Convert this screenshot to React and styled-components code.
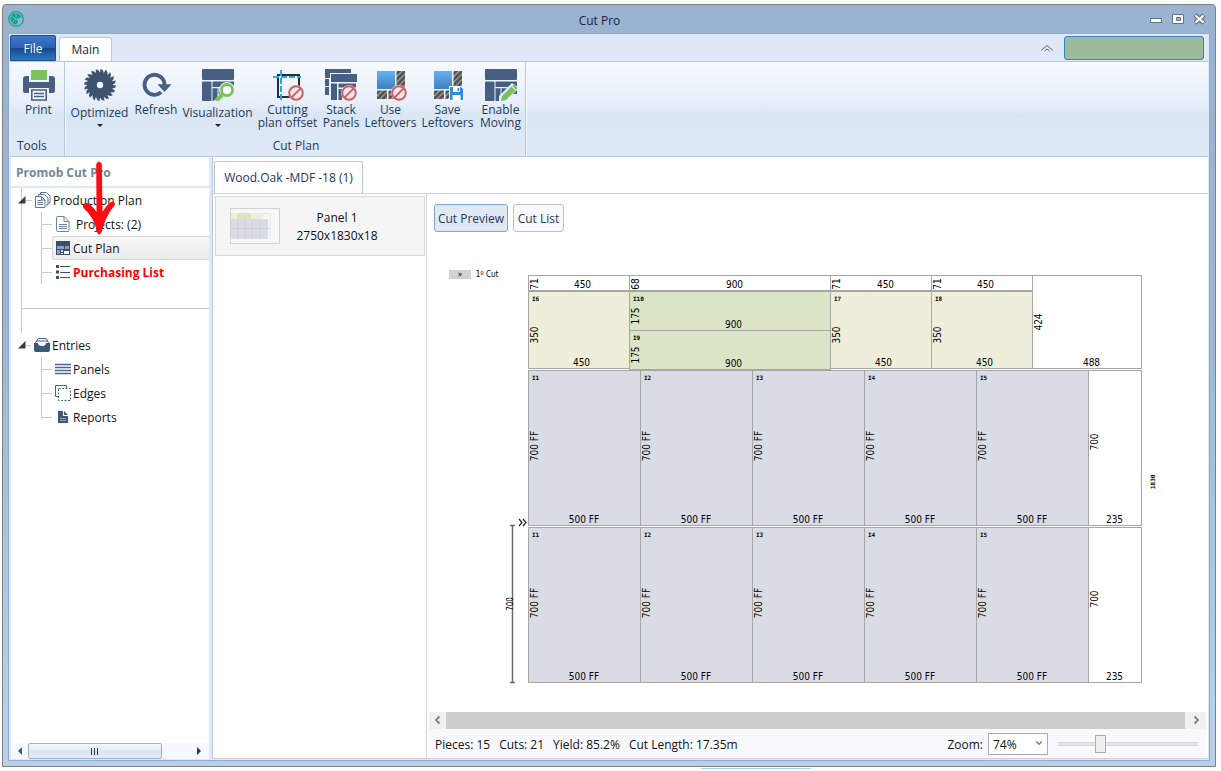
import React from 'react';
import styled, { createGlobalStyle, css } from 'styled-components';

const Global = createGlobalStyle`
  *, *::before, *::after { box-sizing: border-box; }
  body { margin: 0; background: #fff; font-family: "Open Sans", "Noto Sans", sans-serif; font-size: 12px; color: #111; }
  button, select { font: inherit; color: inherit; }
  ul { list-style: none; margin: 0; padding: 0; }
`;

const Desktop = styled.div`
  position: relative;
  min-height: 100vh;
  display: flex;
  padding: 4px 5px 4px 2px;
`;
const TaskbarHint = styled.div`
  position: absolute;
  left: 701px;
  bottom: 2px;
  width: 110px;
  height: 1px;
  background: #a9d5ea;
`;
const Window = styled.div`
  position: relative;
  flex: 1;
  min-width: 0;
  display: flex;
  flex-direction: column;
  border: 1px solid #808080;
  border-radius: 4px 4px 0 0;
  padding: 0 5px 5px;
  background: linear-gradient(#9ab3d0, #9cb5d2 40%, #b9d0ea 95%);
`;
const TitleBar = styled.header`
  display: flex;
  align-items: center;
  height: 28px;
  color: #16263c;
`;
const TitleMark = styled.div`
  display: flex;
  align-items: center;
  width: 43px;
  height: 16px;
`;
const Title = styled.h1`
  flex: 1;
  margin: 0;
  padding-top: 2px;
  text-align: center;
  font-size: 12px;
  font-weight: 400;
`;
const WindowButtons = styled.div`
  display: flex;
  gap: 6px;
  padding-right: 2px;
`;
const PlainButton = styled.button`
  display: flex;
  align-items: center;
  justify-content: center;
  border: 0;
  padding: 0;
  background: transparent;
  width: ${(p) => p.$w || 16}px;
  height: ${(p) => p.$h || 16}px;
`;
const Client = styled.div`
  flex: 1;
  min-height: 0;
  display: flex;
  flex-direction: column;
  border: 1px solid #92a9c8;
  background: #dfe8f6;
  padding: 0 1px 1px;
`;
const TabStrip = styled.div`
  display: flex;
  align-items: flex-end;
  height: 27px;
`;
const FileTab = styled.button`
  width: 46px;
  height: 26px;
  margin-right: 3px;
  border: 1px solid #1d4c9c;
  border-radius: 2px 2px 0 0;
  color: #fff;
  padding: 0;
  background: linear-gradient(#3f79c6, #2a62b4 50%, #17458f 51%, #2b7ab9);
`;
const MainTab = styled.button`
  width: 53px;
  height: 24px;
  border: 1px solid #b8c8e2;
  border-bottom: 0;
  border-radius: 3px 3px 0 0;
  background: #fdfeff;
  color: #16263c;
  padding: 0;
`;
const StripTools = styled.div`
  display: flex;
  gap: 9px;
  margin-left: auto;
  align-items: center;
  height: 27px;
  padding-right: 4px;
`;
const AccountBox = styled.button`
  width: 140px;
  height: 24px;
  border: 1px solid #3d7fbf;
  border-radius: 3px;
  background: #9abc9d;
`;
const Ribbon = styled.div`
  display: flex;
  height: 96px;
  border: solid #b8c8e2;
  border-width: 1px 0;
  background: linear-gradient(#f7fafe, #e5eefa 45%, #dbe6f4 55%, #dfe9f7);
`;
const RibbonGroup = styled.section`
  display: flex;
  flex-direction: column;
  border-right: 1px solid #b8c8e2;
  box-shadow: 1px 0 #f5f9fe;
  padding-left: ${(p) => p.$pad}px;
`;
const GroupButtons = styled.div`
  display: flex;
  flex: 1;
`;
const GroupCaption = styled.div`
  height: 20px;
  line-height: 20px;
  padding-left: ${(p) => (p.$left ? 4 : 0)}px;
  text-align: ${(p) => (p.$left ? 'left' : 'center')};
  color: #1e395b;
`;
const Command = styled.button`
  display: flex;
  flex-direction: column;
  align-items: center;
  width: ${(p) => p.$w}px;
  height: 72px;
  padding: 7px 0 0;
  border: 0;
  background: transparent;
  color: #1e395b;
  line-height: 13px;
  white-space: nowrap;
  text-align: center;
`;
const CommandLabel = styled.span`
  display: block;
  padding-top: ${(p) => (p.$tall ? 5 : 2)}px;
`;
const LabelLine = styled.span`
  display: block;
  height: 13px;
`;
const Caret = styled.span`
  margin-top: 5px;
  border: solid transparent;
  border-width: 3px 3px 0;
  border-top-color: #16263c;
`;

const Body = styled.div`
  flex: 1;
  min-height: 0;
  display: grid;
  grid-template-columns: 198px minmax(0, 1fr);
  gap: 3px;
  padding-left: 1px;
`;
const Sidebar = styled.aside`
  display: flex;
  flex-direction: column;
  min-width: 0;
  background: #fff;
`;
const SidebarTitle = styled.h2`
  margin: 0;
  height: 31px;
  line-height: 31px;
  padding-left: 5px;
  border-bottom: 2px solid #dfe8f6;
  font-size: 12px;
  font-weight: 700;
  color: #73879b;
`;
const Tree = styled.nav`
  flex: 1;
`;
const Branch = styled.section`
  margin-left: 10px;
  ${(p) => p.$ruled && css`
    height: 121px;
    border-left: 1px solid #c8c8c8;
    border-bottom: 1px solid #c8c8c8;
  `}
`;
const Stem = styled.div`
  height: 24px;
  border-left: 1px solid #c8c8c8;
`;
const BranchHead = styled.div`
  display: flex;
  align-items: center;
  height: 24px;
  margin-left: ${(p) => (p.$flush ? -3 : -4)}px;
`;
const Dash = styled.span`
  width: ${(p) => p.$w}px;
  height: 1px;
  margin-right: ${(p) => p.$gap}px;
  background: #c8c8c8;
`;
const BranchLabel = styled.span`
  padding: 1px 0 0 2px;
`;
const Leaves = styled.ul`
  margin-left: ${(p) => (p.$flush ? 20 : 19)}px;
`;
const Leaf = styled.li`
  display: flex;
  align-items: center;
  height: 24px;
  background: linear-gradient(#c8c8c8, #c8c8c8) no-repeat 0 0 / 1px ${(p) => (p.$last ? '50%' : '100%')};
`;
const LeafLink = styled.a`
  flex: 1;
  height: 24px;
  display: flex;
  align-items: center;
  gap: ${(p) => (p.$wide ? 5 : 2)}px;
  padding-left: 2px;
  text-decoration: none;
  white-space: nowrap;
  color: ${(p) => (p.$alert ? '#ff0000' : '#111')};
  font-weight: ${(p) => (p.$alert ? 700 : 400)};
  border: solid ${(p) => (p.$active ? '#d6d6d6' : 'transparent')};
  border-width: 1px 0 1px 1px;
  border-radius: 3px 0 0 3px;
  background: ${(p) => (p.$active ? 'linear-gradient(#f7f7f7, #ececec)' : 'transparent')};
`;
const SideScroll = styled.div`
  display: flex;
  align-items: center;
  height: 16px;
  background: #f5f8fe;
`;
const SideThumb = styled.div`
  display: flex;
  align-items: center;
  justify-content: center;
  gap: 1px;
  width: 134px;
  height: 16px;
  margin: 0 auto 0 0;
  border: 1px solid #9fb0cc;
  border-radius: 2px;
  background: linear-gradient(#f6f9fe, #e2eaf6 50%, #d8e3f3 51%, #e2ebf8);
`;
const Grip = styled.i`
  width: 1px;
  height: 7px;
  margin-right: 1px;
  background: #1e395b;
`;

const Workspace = styled.main`
  display: flex;
  flex-direction: column;
  min-width: 0;
  background: #fff;
  border-left: 1px solid #b8c8e2;
  border-bottom: 1px solid #d0d0d0;
`;
const MaterialTabs = styled.div`
  display: flex;
  align-items: flex-end;
  height: 37px;
  padding-left: 1px;
  border-bottom: 1px solid #d2d2d2;
`;
const MaterialTab = styled.button`
  height: 32px;
  width: 149px;
  padding: 0;
  border: 1px solid #b4c6e0;
  border-bottom: 0;
  border-radius: 2px 2px 0 0;
  background: #fff;
  color: #1e395b;
  white-space: nowrap;
`;
const Split = styled.div`
  flex: 1;
  min-height: 0;
  display: grid;
  grid-template-columns: 214px minmax(0, 1fr);
`;
const PanelList = styled.div`
  border-right: 1px solid #d5d5d5;
  padding: 2px 1px 0 2px;
`;
const PanelCard = styled.button`
  display: flex;
  align-items: center;
  width: 100%;
  height: 60px;
  padding: 0 0 0 14px;
  border: 1px solid #d9d9d9;
  background: #f5f5f5;
  line-height: 18px;
`;
const PanelText = styled.span`
  flex: 1;
  padding: 2px 30px 0 0;
  text-align: center;
`;
const Preview = styled.section`
  display: flex;
  flex-direction: column;
  min-width: 0;
  padding: 0 2px 1px;
`;
const ViewSwitch = styled.div`
  display: flex;
  gap: 5px;
  padding: 10px 5px 0;
`;
const ViewButton = styled.button`
  width: ${(p) => p.$w}px;
  height: 28px;
  padding: 0;
  border: 1px solid ${(p) => (p.$on ? '#7fa5d3' : '#bcc0cc')};
  border-radius: 3px;
  background: ${(p) => (p.$on ? '#dfe9f6' : '#f7f9ff')};
  color: #1e395b;
  white-space: nowrap;
`;
const Canvas = styled.div`
  flex: 1;
  min-height: 0;
  overflow: hidden;
  padding: 28px 0 0 11px;
  svg { display: block; }
`;
const HScroll = styled.div`
  display: flex;
  height: 17px;
  background: #f0f0f0;
`;
const HThumb = styled.div`
  flex: 1;
  background: #cdcdcd;
`;
const Status = styled.footer`
  display: flex;
  align-items: center;
  gap: 9px;
  height: 28px;
  padding: 2px 6px 0;
  background: #f8f9ff;
  white-space: nowrap;
`;
const ZoomBox = styled.div`
  display: flex;
  align-items: center;
  gap: 5px;
  margin-left: auto;
`;
const SelectWrap = styled.span`
  position: relative;
  svg { position: absolute; right: 5px; top: 6px; pointer-events: none; }
`;
const ZoomSelect = styled.select`
  display: block;
  appearance: none;
  width: 60px;
  height: 22px;
  padding: 0 4px;
  border: 1px solid #acacac;
  border-radius: 0;
  background: #fff;
`;
const ZoomSlider = styled.input`
  appearance: none;
  width: 140px;
  height: 18px;
  margin: 0 2px 0 5px;
  background: linear-gradient(#e7eaea, #e7eaea) no-repeat center / 100% 2px, linear-gradient(#d6d6d6, #d6d6d6) no-repeat center / 100% 4px;
  &::-webkit-slider-thumb {
    appearance: none;
    width: 11px;
    height: 18px;
    border: 1px solid #acacac;
    background: #f0f0f0;
  }
`;
const Pointer = styled.svg`
  position: absolute;
  left: 77px;
  top: 155px;
  pointer-events: none;
`;

const NAVY = '#465f83';
const Ico = ({ children, size = 32, ...rest }) => (
  <svg width={size} height={size} viewBox={`0 0 ${size} ${size}`} fill="none" aria-hidden="true" {...rest}>{children}</svg>
);
const Forbidden = ({ x, y }) => (
  <g>
    <circle cx={x} cy={y} r="8" fill="#f2f5fb" />
    <circle cx={x} cy={y} r="6.8" fill="#f1e4ea" stroke="#cc5f61" strokeWidth="2" />
    <path d={`M${x - 4.6} ${y + 4.6}L${x + 4.6} ${y - 4.6}`} stroke="#cc5f61" strokeWidth="2" />
  </g>
);
const PrintIcon = () => (
  <Ico>
    <path d="M8 1h16v10H8z" fill="#7ac25b" />
    <path d="M3 7h3v6h20V7h3q3 0 3 3v12q0 2-2 2h-4v-5H6v5H2q-2 0-2-2V10q0-3 3-3z" fill={NAVY} />
    <path d="M8.800 21h14.400v10H8.800z" fill="#f5f8fc" stroke={NAVY} strokeWidth="1.600" />
    <path d="M11 24.500h10M11 27.500h10" stroke={NAVY} strokeWidth="1.300" />
  </Ico>
);
const teeth = Array.from({ length: 20 }, (_, i) => {
  const at = (r, a) => `${(16 + r * Math.cos(a)).toFixed(2)} ${(16 + r * Math.sin(a)).toFixed(2)}`;
  const a = (i * Math.PI) / 10;
  return `${i ? 'L' : 'M'}${at(12.5, a)}L${at(16.4, a + 0.04)}L${at(15, a + 0.2)}`;
}).join('') + 'Z';
const SawIcon = () => (
  <Ico>
    <path d={`${teeth}M19.200 16a3.200 3.200 0 1 0-6.400 0a3.200 3.200 0 1 0 6.400 0Z`} fill="#3f5370" fillRule="evenodd" />
  </Ico>
);
const RefreshIcon = () => (
  <Ico>
    <path d="M21.200 23.200A10 10 0 1 1 24.500 16" stroke={NAVY} strokeWidth="3.800" />
    <path d="M17.500 15.200H31.500L24.500 23z" fill={NAVY} />
  </Ico>
);
const PanelsArt = () => (
  <>
    <rect width="32" height="11" rx="1" fill={NAVY} />
    <rect y="12.500" width="9.500" height="19.500" rx="1" fill={NAVY} />
    <path d="M10.500 12.500H32v5.500H10.500zM10.500 19.200h5V32h-5zM16.500 19.200H32V25H16.500z" fill={NAVY} />
  </>
);
const VisualIcon = () => (
  <Ico>
    <PanelsArt />
    <circle cx="25" cy="21" r="8" fill="#e4edf8" />
    <path d="M11.500 32l8.500-9 5 5-5 4z" fill="#e4edf8" />
    <circle cx="25" cy="21" r="5.500" fill="#fff" stroke="#7ac25b" strokeWidth="2.800" />
    <path d="M21 25l-7 7" stroke="#7ac25b" strokeWidth="4" />
  </Ico>
);
const OffsetIcon = () => (
  <Ico>
    <rect x="6" y="6" width="21" height="22" stroke="#2b2b2b" strokeWidth="2" />
    <path d="M9 1v31M1 8h28" stroke="#22a9e8" strokeWidth="2" strokeDasharray="6 2" />
    <Forbidden x={24} y={24} />
  </Ico>
);
const StackIcon = () => (
  <Ico>
    <path d="M0 0h26v4H5v5H0zM0 10h4v7H0zM0 18h4v8H0z" fill={NAVY} />
    <path d="M6 5h26v8H6zM6 14.500h6V31H6zM13.500 14.500H31v4H13.500zM13.500 20H17v11h-3.500z" fill={NAVY} />
    <path d="M0 9.500h4.500" stroke="#eef3fb" />
    <Forbidden x={24} y={24} />
  </Ico>
);
const LeftoverArt = () => (
  <>
    <defs>
      <linearGradient id="sheet" x1="0" y1="0" x2="0" y2="1">
        <stop offset="0" stopColor="#63b1f4" /><stop offset="1" stopColor="#3f7fbd" />
      </linearGradient>
      <pattern id="hatch" width="4" height="4" patternUnits="userSpaceOnUse" patternTransform="rotate(45)">
        <rect width="4" height="4" fill="#4f4f4f" /><rect width="1.300" height="4" fill="#a5a5a5" />
      </pattern>
    </defs>
    <rect x="2" y="2" width="18" height="18" fill="url(#sheet)" />
    <path d="M21.500 2H30v17h-8.500zM2 21.500h10V30H2zM13.500 21.500H22V30h-8.500z" fill="url(#hatch)" />
  </>
);
const UseIcon = () => (<Ico><LeftoverArt /><Forbidden x={24} y={24} /></Ico>);
const SaveIcon = () => (
  <Ico>
    <LeftoverArt />
    <path d="M17 17h15v15H17z" fill="#eef3fb" />
    <path d="M18 18h11l2 2v11H18z" fill="#2f8fd6" />
    <path d="M21 18h7v5h-7zM20.500 26h8v5h-8z" fill="#fff" />
    <path d="M25.500 19h1.500v3h-1.500z" fill="#2f8fd6" />
  </Ico>
);
const MovingIcon = () => (
  <Ico>
    <PanelsArt />
    <path d="M14 32v-5l13-13 7 5-13 13z" fill="#e4edf8" />
    <path d="M16 32l1-5 9.500-9.500 4 4L21 31zM27.500 16.500l1.500-1.200 3 3v1.500l-1.300 1z" fill="#7ac25b" />
  </Ico>
);

const PlanIcon = () => (
  <Ico size={16} stroke="#5d7395">
    <path d="M5.500 3V.500h6l3.500 3.500v7H13.500M3.500 5V2.500h6l3.500 3.500v7H11" fill="#fff" />
    <path d="M.500 4.500h6l3.500 3.500v7.500H.500zM2.500 8.500h4M2.500 10.500h5.500M2.500 12.500h5.500M6.500 4.500v3.500h3.500" fill="#fff" />
  </Ico>
);
const ProjectIcon = () => (
  <Ico size={16} stroke="#6d82a3">
    <path d="M1.500 1.500q0-1 1-1h6.500l5 5v9q0 1-1 1h-10.500q-1 0-1-1zM9 .500v5h5M4 8.500h8M4 10.500h8M4 12.500h8" fill="#fff" />
  </Ico>
);
const CutIcon = () => (
  <Ico size={16}>
    <path d="M1 1h14v14H1z" fill="#3d4f68" />
    <path d="M2 6h7v3H2z" fill="#8aa3c4" />
    <path d="M10 6h4v3h-4zM2 10h3v4H2z" fill="#8f9db0" />
    <path d="M6 10h2v2H6z" fill="#d5dce6" />
    <path d="M9 11h5v3H9zM6 13h2v1H6z" fill="#fff" />
  </Ico>
);
const ListIcon = () => (
  <Ico size={16} stroke="#3d4f68">
    <path d="M1 2.500h3M1 8h3M1 13.500h3" strokeWidth="3" />
    <path d="M5 2.500h10M5 8.500h10M5 13.500h10" />
  </Ico>
);
const EntriesIcon = () => (
  <Ico size={16}>
    <path d="M2.500 4Q3 1.500 5 1.500h6q2 0 2.500 2.500M1 6Q2 4 4 4h8q2 0 3 2" stroke={NAVY} />
    <path d="M0 6h4q0 3 4 3t4-3h4v7q0 2-2 2H2q-2 0-2-2z" fill="#3f5878" />
  </Ico>
);
const LinesIcon = () => (<Ico size={16}><path d="M0 3.500h16M0 6.500h16M0 9.500h16M0 12.500h16" stroke="#4d668c" strokeWidth="1.400" /></Ico>);
const EdgesIcon = () => (
  <Ico size={16} stroke={NAVY}>
    <path d="M3.500 11.500h-3V.500h11v3" />
    <rect x="3.500" y="3.500" width="12" height="12" strokeDasharray="2 1.500" />
  </Ico>
);
const ReportIcon = () => (
  <Ico size={16}>
    <path d="M3 2h5v5h5v7H3z" fill="#3f5878" /><path d="M9 2l4 4H9z" fill="#3f5878" />
    <path d="M5 9.500h6M5 11.500h6" stroke="#a9b6c9" strokeWidth=".8" />
  </Ico>
);
const Expander = () => (<svg width="8" height="8" viewBox="0 0 8 8" aria-hidden="true"><path d="M7.500 0v7.500H0z" fill="#3c3c3c" /></svg>);
const Chevron = ({ d, size = 10 }) => (
  <svg width={size} height={size} viewBox="0 0 10 10" fill="none" aria-hidden="true"><path d={d} stroke="#808080" strokeWidth="1.800" /></svg>
);

const COMMANDS = [
  { label: ['Optimized'], icon: SawIcon, w: 65, drop: true },
  { label: ['Refresh'], icon: RefreshIcon, w: 48 },
  { label: ['Visualization'], icon: VisualIcon, w: 75, drop: true },
  { label: ['Cutting', 'plan offset'], icon: OffsetIcon, w: 65 },
  { label: ['Stack', 'Panels'], icon: StackIcon, w: 42 },
  { label: ['Use', 'Leftovers'], icon: UseIcon, w: 57 },
  { label: ['Save', 'Leftovers'], icon: SaveIcon, w: 57 },
  { label: ['Enable', 'Moving'], icon: MovingIcon, w: 49 },
];

const BLUE = '#d9dce4';
const CREAM = '#efeedb';
const GREEN = '#d9e5c6';
const COLS = [0, 112, 224, 336, 448];
// dy shifts the side label off the middle of its piece, dx the base label.
const PIECES = [
  { x: 0, y: 0, w: 101, h: 15, side: '71', base: '450', dx: 4, dy: 1 },
  { x: 101, y: 0, w: 201, h: 15, side: '68', base: '900', dx: 5, dy: 1 },
  { x: 302, y: 0, w: 101, h: 15, side: '71', base: '450', dx: 5, dy: 1 },
  { x: 403, y: 0, w: 101, h: 15, side: '71', base: '450', dx: 4, dy: 1 },
  { x: 504, y: 0, w: 109, h: 93, side: '424', base: '488', dx: 5, dy: 0 },
  { x: 0, y: 16, w: 101, h: 77, fill: CREAM, id: 'I6', side: '350', base: '450', dx: 3, dy: 5 },
  { x: 302, y: 16, w: 101, h: 77, fill: CREAM, id: 'I7', side: '350', base: '450', dx: 3, dy: 5 },
  { x: 403, y: 16, w: 101, h: 77, fill: CREAM, id: 'I8', side: '350', base: '450', dx: 3, dy: 5 },
  { x: 101, y: 16, w: 201, h: 39, fill: GREEN, id: 'I10', side: '175', base: '900', dx: 4, dy: 5 },
  { x: 101, y: 55, w: 201, h: 39, fill: GREEN, id: 'I9', side: '175', base: '900', dx: 4, dy: 5 },
  ...[95, 252].flatMap((y) => [
    ...COLS.map((x, i) => ({ x, y, w: 112, h: 155, fill: BLUE, id: `I${i + 1}`, side: '700 FF', base: '500 FF', dx: 0, dy: -2 })),
    { x: 560, y, w: 53, h: 155, side: '700', base: '235', dx: 0, dy: -6 },
  ]),
];

const PlanText = styled.text`
  font-family: "DejaVu Sans Condensed", "DejaVu Sans", sans-serif;
  font-size: ${(p) => p.$s || 10}px;
  text-anchor: middle;
  fill: #000;
`;
const TinyText = styled(PlanText)`
  font-family: "DejaVu Sans Mono", monospace;
  font-weight: 700;
  font-size: 6px;
  text-anchor: start;
`;

const CutDrawing = () => (
  <svg width="730" height="440" viewBox="-88 -15 730 440" role="img" aria-label="Cut layout of panel 1">
    <rect x="-79" y="-5" width="22" height="9" fill="#d2d2d2" />
    <PlanText x="-68" y="2" $s={8}>»</PlanText>
    <PlanText x="-41" y="2" $s={8}>1º Cut</PlanText>
    {PIECES.map((p, i) => (
      <g key={i}>
        <rect x={p.x + 0.5} y={p.y + 0.5} width={p.w} height={p.h} fill={p.fill || '#fff'} stroke="#a6a6a6" />
        {p.id && <TinyText x={p.x + 4} y={p.y + 10}>{p.id}</TinyText>}
        <PlanText transform={`translate(${p.x + 10} ${Math.round(p.y + p.h / 2) + p.dy}) rotate(-90)`}>{p.side}</PlanText>
        <PlanText x={p.x + p.w / 2 + p.dx} y={p.y + p.h - 2}>{p.base}</PlanText>
      </g>
    ))}
    <TinyText transform="translate(627 214) rotate(-90)">1830</TinyText>
    <path d="M-15.500 250v157M-18 250.500h5M-18 407.500h5" stroke="#6b6b6b" strokeWidth="1.500" fill="none" />
    <PlanText transform="translate(-15 329) rotate(-90)" $s={8}>700</PlanText>
    <path d="M-9 244l3 3.500-3 3.500M-5 244l3 3.500-3 3.500" stroke="#222" strokeWidth="1.200" fill="none" />
  </svg>
);

const Thumb = () => (
  <svg width="50" height="36" viewBox="0 0 50 36" aria-hidden="true">
    <rect x=".5" y=".5" width="49" height="35" fill="#f7f7f7" stroke="#d2d2d2" />
    <path d="M1 5h32v6H1z" fill={CREAM} /><path d="M7 5h14v6H7z" fill={GREEN} />
    <path d="M1 11h37v20H1z" fill={BLUE} />
    <path d="M8 11v20M15 11v20M22 11v20M30 11v20M1 20.500h40" stroke="#cdd1db" />
    <path d="M33 5.500h7v25" fill="none" stroke="#e8e8e8" />
  </svg>
);

const Item = ({ icon: Icon, children, last, ...style }) => (
  <Leaf $last={last}>
    <Dash $w={11} $gap={0} />
    <LeafLink href="#" {...style}><Icon /><span>{children}</span></LeafLink>
  </Leaf>
);

export default function App() {
  return (
    <Desktop>
      <Global />
      <Window>
        <TitleBar>
          <TitleMark>
            <Ico size={16}>
              <circle cx="8" cy="8" r="7.300" stroke="#0aa58c" strokeWidth="1.200" />
              <path d="M8 2C4 2 2 5 2.500 8.500S6 14 8.500 13.500L10 10.500 8.500 8.500l2-1.500 3-.500Q13 3 8 2z" fill="#0aa58c" />
              <path d="M8 8L3 5M8 8l-4 4M8 8V2" stroke="#8fc6c8" strokeWidth=".7" />
            </Ico>
          </TitleMark>
          <Title>Cut Pro</Title>
          <WindowButtons>
            <PlainButton aria-label="Minimize"><Ico size={16}><rect x="2.500" y="7.500" width="11" height="4" fill="#fff" stroke="#63738c" /></Ico></PlainButton>
            <PlainButton aria-label="Maximize"><Ico size={16}><path d="M2.500 3.500h11v9h-11zM6.500 6.500v3h4v-3z" fill="#fff" fillRule="evenodd" stroke="#63738c" /></Ico></PlainButton>
            <PlainButton aria-label="Close"><Ico size={16}><path d="M3 4l9 8M12 4l-9 8" stroke="#63738c" strokeWidth="4.500" /><path d="M3.500 4.500l8 7M11.500 4.500l-8 7" stroke="#fff" strokeWidth="2.200" /></Ico></PlainButton>
          </WindowButtons>
        </TitleBar>
        <Client>
          <TabStrip>
            <FileTab>File</FileTab>
            <MainTab>Main</MainTab>
            <StripTools>
              <PlainButton aria-label="Collapse ribbon">
                <Ico size={16}><path d="M2 10.500L8 5.500l6 5M5.500 11L8 9l2.500 2" stroke="#6b6b6b" /></Ico>
              </PlainButton>
              <AccountBox aria-label="Account" />
            </StripTools>
          </TabStrip>
          <Ribbon>
            <RibbonGroup $pad={3}>
              <GroupButtons>
                <Command $w={51}><PrintIcon /><CommandLabel><LabelLine>Print</LabelLine></CommandLabel></Command>
              </GroupButtons>
              <GroupCaption $left>Tools</GroupCaption>
            </RibbonGroup>
            <RibbonGroup $pad={2}>
              <GroupButtons>
                {COMMANDS.map(({ label, icon: Icon, w, drop }) => (
                  <Command key={label.join()} $w={w}>
                    <Icon />
                    <CommandLabel $tall={drop}>
                      {label.map((line) => (<LabelLine key={line}>{line}</LabelLine>))}
                    </CommandLabel>
                    {drop && <Caret />}
                  </Command>
                ))}
              </GroupButtons>
              <GroupCaption>Cut Plan</GroupCaption>
            </RibbonGroup>
          </Ribbon>
          <Body>
            <Sidebar>
              <SidebarTitle>Promob Cut Pro</SidebarTitle>
              <Tree>
                <Branch $ruled>
                  <BranchHead>
                    <Expander /><Dash $w={6} $gap={3} /><PlanIcon /><BranchLabel>Production Plan</BranchLabel>
                  </BranchHead>
                  <Leaves>
                    <Item icon={ProjectIcon} $wide>Projects: (2)</Item>
                    <Item icon={CutIcon} $active>Cut Plan</Item>
                    <Item icon={ListIcon} $alert>Purchasing List</Item>
                  </Leaves>
                </Branch>
                <Branch>
                  <Stem />
                  <BranchHead $flush>
                    <Expander /><Dash $w={5} $gap={3} /><EntriesIcon /><BranchLabel>Entries</BranchLabel>
                  </BranchHead>
                  <Leaves $flush>
                    <Item icon={LinesIcon}>Panels</Item>
                    <Item icon={EdgesIcon}>Edges</Item>
                    <Item icon={ReportIcon} last>Reports</Item>
                  </Leaves>
                </Branch>
              </Tree>
              <SideScroll>
                <PlainButton $w={17} aria-label="Scroll left"><svg width="4" height="8"><path d="M4 0v8L0 4z" fill="#3f5878" /></svg></PlainButton>
                <SideThumb><Grip /><Grip /><Grip /></SideThumb>
                <PlainButton $w={20} aria-label="Scroll right"><svg width="4" height="8"><path d="M0 0v8l4-4z" fill="#1e395b" /></svg></PlainButton>
              </SideScroll>
            </Sidebar>
            <Workspace>
              <MaterialTabs><MaterialTab>Wood.Oak -MDF -18 (1)</MaterialTab></MaterialTabs>
              <Split>
                <PanelList>
                  <PanelCard>
                    <Thumb />
                    <PanelText>Panel 1<br />2750x1830x18</PanelText>
                  </PanelCard>
                </PanelList>
                <Preview>
                  <ViewSwitch>
                    <ViewButton $on $w={74}>Cut Preview</ViewButton>
                    <ViewButton $w={51}>Cut List</ViewButton>
                  </ViewSwitch>
                  <Canvas><CutDrawing /></Canvas>
                  <HScroll>
                    <PlainButton $w={17} aria-label="Scroll left"><Chevron d="M6.500 1.500L3 5l3.500 3.500" /></PlainButton>
                    <HThumb />
                    <PlainButton $w={21} aria-label="Scroll right"><Chevron d="M3.500 1.500L7 5 3.500 8.500" /></PlainButton>
                  </HScroll>
                  <Status>
                    <span>Pieces: 15</span>
                    <span>Cuts: 21</span>
                    <span>Yield: 85.2%</span>
                    <span>Cut Length: 17.35m</span>
                    <ZoomBox>
                      <label htmlFor="zoom">Zoom:</label>
                      <SelectWrap>
                        <ZoomSelect id="zoom" defaultValue="74"><option value="74">74%</option><option value="100">100%</option></ZoomSelect>
                        <Chevron size={8} d="M1.500 3L5 6.500 8.500 3" />
                      </SelectWrap>
                      <ZoomSlider type="range" aria-label="Zoom level" min="0" max="100" defaultValue="29" />
                    </ZoomBox>
                  </Status>
                </Preview>
              </Split>
            </Workspace>
          </Body>
        </Client>
        <Pointer width="40" height="80" viewBox="0 0 40 80" aria-hidden="true">
          <path d="M16.200 4q2.800-5 5.600 0L22.500 52Q26.500 45 31 42q5-1 3.500 3.500Q26 55 21.500 72q-2.500 5-4.500 0Q14 57 3.500 48 1.500 43.500 7 43q5 2 9.500 9z" fill="#ff0b12" />
        </Pointer>
      </Window>
      <TaskbarHint />
    </Desktop>
  );
}
